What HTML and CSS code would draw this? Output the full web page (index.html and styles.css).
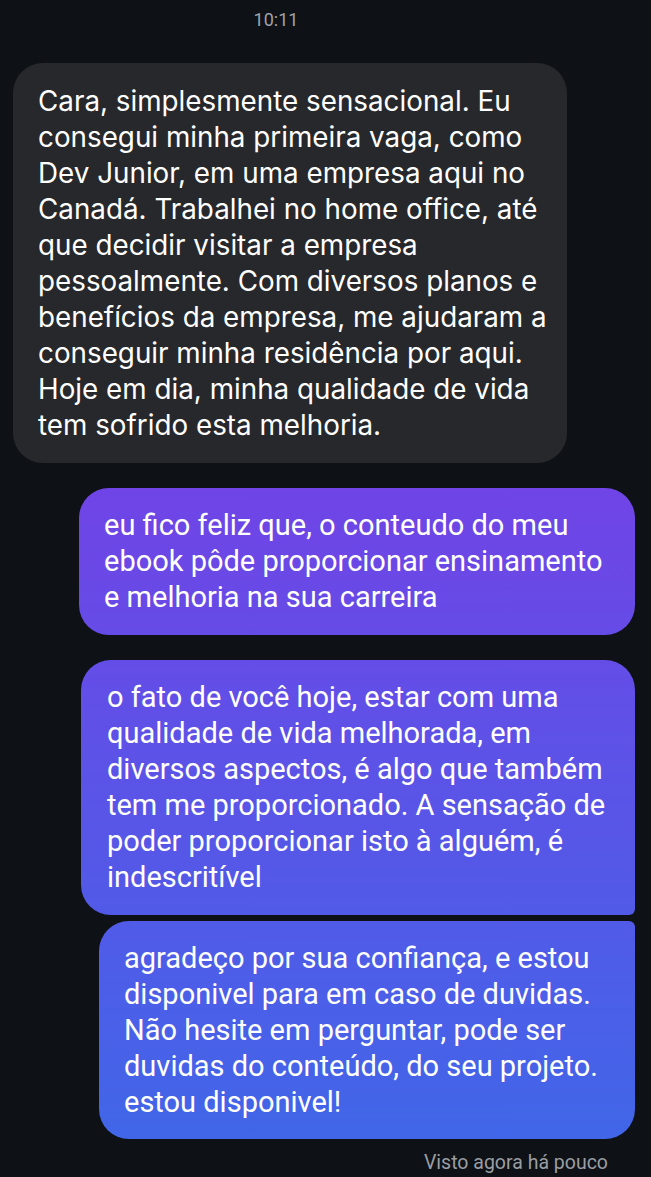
FILE: index.html
```html
<!DOCTYPE html>
<html lang="pt-BR">
<head>
<meta charset="utf-8">
<title>Chat</title>
<link rel="stylesheet" href="styles.css">
</head>
<body>
<main class="chat">
  <div class="time">10:11</div>
  <div class="thread">
    <div class="bubble received">Cara, simplesmente sensacional. Eu<br>consegui minha primeira vaga, como<br>Dev Junior, em uma empresa aqui no<br>Canadá. Trabalhei no home office, até<br>que decidir visitar a empresa<br>pessoalmente. Com diversos planos e<br>benefícios da empresa, me ajudaram a<br>conseguir minha residência por aqui.<br>Hoje em dia, minha qualidade de vida<br>tem sofrido esta melhoria.</div>
    <div class="bubble sent s1">eu fico feliz que, o conteudo do meu<br>ebook pôde proporcionar ensinamento<br>e melhoria na sua carreira</div>
    <div class="group">
      <div class="bubble sent s2">o fato de você hoje, estar com uma<br>qualidade de vida melhorada, em<br>diversos aspectos, é algo que também<br>tem me proporcionado. A sensação de<br>poder proporcionar isto à alguém, é<br>indescritível</div>
      <div class="bubble sent s3">agradeço por sua confiança, e estou<br>disponivel para em caso de duvidas.<br>Não hesite em perguntar, pode ser<br>duvidas do conteúdo, do seu projeto.<br>estou disponivel!</div>
    </div>
    <div class="seen">Visto agora há pouco</div>
  </div>
</main>
</body>
</html>
```
FILE: styles.css
```css
html, body {
  margin: 0;
  padding: 0;
  background: #0e1115;
}
body {
  height: 1177px;
  overflow: hidden;
}
.chat {
  display: flex;
  flex-direction: column;
}
.time {
  font-family: Roboto, "Liberation Sans", sans-serif;
  font-size: 18px;
  line-height: 20px;
  color: #9fa3a8;
  text-align: center;
  padding-top: 10px;
  padding-right: 99px;
}
.thread {
  display: flex;
  flex-direction: column;
  margin-top: 33px;
}
.bubble {
  line-height: 36px;
  color: #ffffff;
  border-radius: 30px;
  padding: 19px 24px 20px 25px;
  box-sizing: border-box;
  white-space: nowrap;
}
.received {
  font-family: Inter, "Noto Sans", sans-serif;
  font-size: 27.8px;
  background: #26282c;
  margin-left: 13px;
  width: 554px;
  padding-top: 20px;
}
.sent {
  font-family: Roboto, "Liberation Sans", sans-serif;
  font-size: 29px;
  align-self: flex-end;
  margin-right: 16px;
  background: linear-gradient(180deg, #7044e6 487px, #4166e8 1138px) fixed;
}
.s1 {
  width: 556px;
  margin-top: 25px;
}
.group {
  display: flex;
  flex-direction: column;
  align-items: flex-end;
  gap: 6px;
  margin-top: 25px;
}
.s2 {
  width: 554px;
  border-bottom-right-radius: 6px;
  padding-left: 26px;
}
.s3 {
  width: 536px;
  border-top-right-radius: 6px;
  padding-bottom: 19px;
}
.seen {
  font-family: Roboto, "Liberation Sans", sans-serif;
  font-size: 19.5px;
  line-height: 22px;
  color: #9a9ea3;
  align-self: flex-end;
  margin-right: 43px;
  margin-top: 13px;
}
```
